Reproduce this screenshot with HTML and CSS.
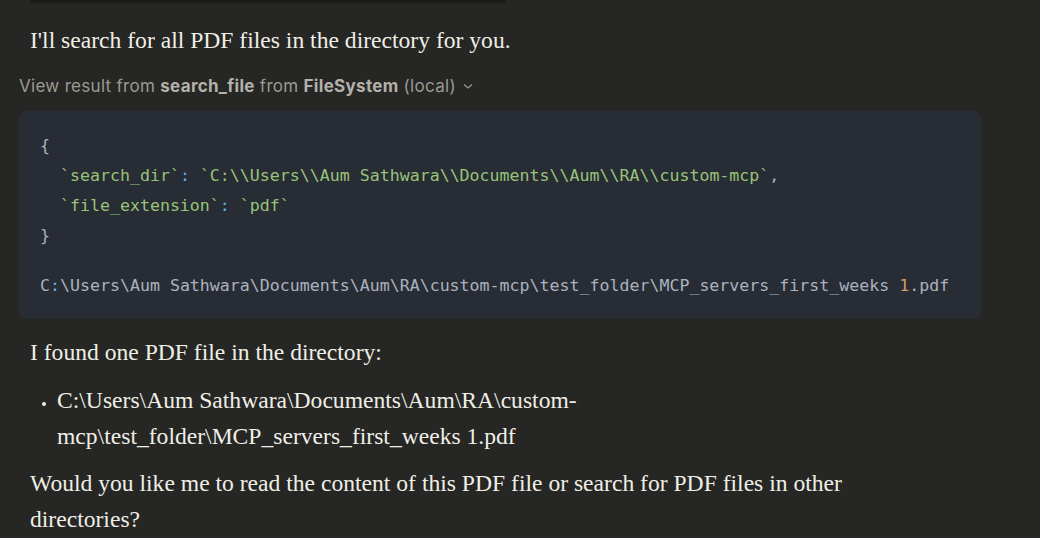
FILE: index.html
```html
<!DOCTYPE html>
<html>
<head>
<meta charset="utf-8">
<link rel="stylesheet" href="styles.css">
</head>
<body>
<div class="page">
  <div class="prev-edge"></div>
  <div class="msg">
    <p class="para first">I'll search for all PDF files in the directory for you.</p>
    <div class="tool-line">
      <span>View result from </span><b>search_file</b><span> from </span><b>FileSystem</b><span> (local)</span>
      <svg class="chev" width="12" height="12" viewBox="0 0 12 12"><path d="M2 4.5 L6 8 L10 4.5" fill="none" stroke="currentColor" stroke-width="1.2"/></svg>
    </div>
    <div class="code">
<pre class="code-in"><span class="p">{</span>
  <span class="s">`search_dir`</span><span class="c">:</span> <span class="s">`C:\\Users\\Aum Sathwara\\Documents\\Aum\\RA\\custom-mcp`</span><span class="p">,</span>
  <span class="s">`file_extension`</span><span class="c">:</span> <span class="s">`pdf`</span>
<span class="p">}</span></pre>
<pre class="code-out">C<span class="c">:</span>\Users\Aum Sathwara\Documents\Aum\RA\custom-mcp\test_folder\MCP_servers_first_weeks <span class="n">1</span>.pdf</pre>
    </div>
    <p class="para">I found one PDF file in the directory:</p>
    <ul class="list">
      <li>C:\Users\Aum Sathwara\Documents\Aum\RA\custom-mcp\test_folder\MCP_servers_first_weeks 1.pdf</li>
    </ul>
    <p class="para">Would you like me to read the content of this PDF file or search for PDF files in other directories?</p>
  </div>
</div>
</body>
</html>
```
FILE: styles.css
```css
html, body {
  margin: 0;
  padding: 0;
  background: #262624;
}
.page {
  width: 1040px;
  height: 538px;
  overflow: hidden;
}
.prev-edge {
  margin-left: 31px;
  width: 475px;
  height: 2px;
  background: #1a1a18;
  box-shadow: 0 1px 2px rgba(0,0,0,0.3);
}
.msg {
  margin-left: 19px;
  width: 962px;
}
.para {
  margin: 0;
  padding: 0 60px 0 11px;
  font-family: "Liberation Serif", serif;
  font-size: 23.6px;
  line-height: 36px;
  color: #f0eee6;
}
.para.first {
  margin-top: 20px;
}
.tool-line {
  margin-top: 16px;
  display: flex;
  align-items: center;
  font-family: Inter, "Liberation Sans", sans-serif;
  font-size: 17px;
  letter-spacing: 0.3px;
  color: #9c9a92;
  white-space: pre;
  height: 24px;
}
.tool-line b {
  font-weight: 700;
  color: #b3b1a9;
}
.chev {
  margin-left: 6px;
  color: #9c9a92;
}
.code {
  margin-top: 13px;
  background: #282c34;
  border-radius: 8px;
  padding: 20px 21px 18px;
  margin-bottom: 15px;
}
.code pre {
  margin: 0;
  font-family: "DejaVu Sans Mono", monospace;
  font-size: 16.6px;
  line-height: 30px;
  color: #abb2bf;
}
.code-out {
  margin-top: 20px !important;
}
.s { color: #98c379; }
.c { color: #61afef; }
.p { color: #abb2bf; }
.n { color: #d19a66; }
.list {
  margin: 12px 0 11px;
  padding-left: 38px;
  padding-right: 60px;
  font-family: "Liberation Serif", serif;
  font-size: 23.6px;
  line-height: 36px;
  color: #f0eee6;
}
.list li::marker {
  font-size: 15px;
}
```
